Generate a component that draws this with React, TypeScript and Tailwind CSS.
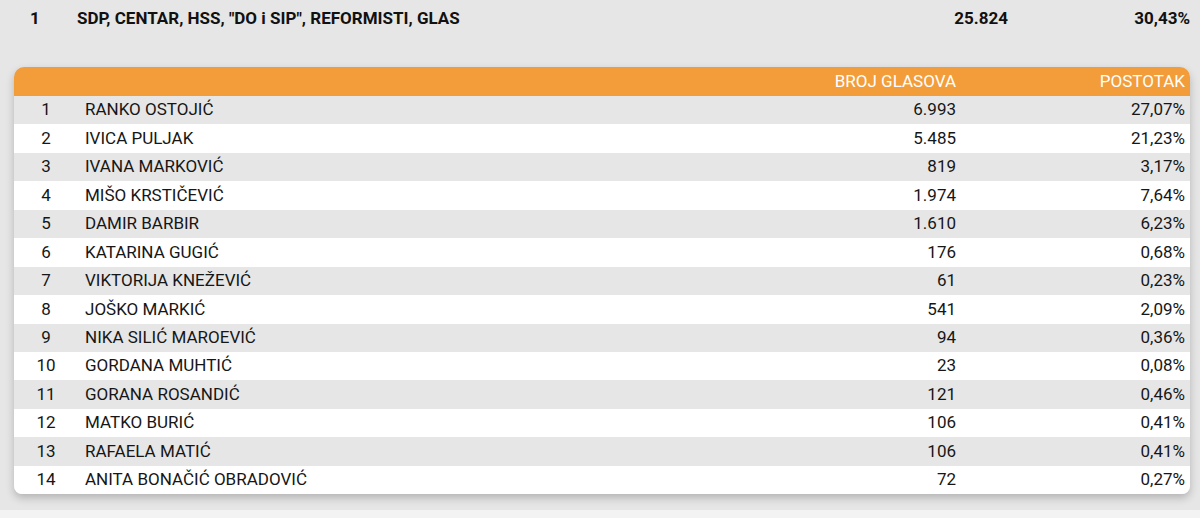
import React from "react";

const rows: [string, string, string][] = [
  ["RANKO OSTOJIĆ", "6.993", "27,07%"],
  ["IVICA PULJAK", "5.485", "21,23%"],
  ["IVANA MARKOVIĆ", "819", "3,17%"],
  ["MIŠO KRSTIČEVIĆ", "1.974", "7,64%"],
  ["DAMIR BARBIR", "1.610", "6,23%"],
  ["KATARINA GUGIĆ", "176", "0,68%"],
  ["VIKTORIJA KNEŽEVIĆ", "61", "0,23%"],
  ["JOŠKO MARKIĆ", "541", "2,09%"],
  ["NIKA SILIĆ MAROEVIĆ", "94", "0,36%"],
  ["GORDANA MUHTIĆ", "23", "0,08%"],
  ["GORANA ROSANDIĆ", "121", "0,46%"],
  ["MATKO BURIĆ", "106", "0,41%"],
  ["RAFAELA MATIĆ", "106", "0,41%"],
  ["ANITA BONAČIĆ OBRADOVIĆ", "72", "0,27%"],
];

export default function App() {
  return (
    <div className="w-[1200px] h-[518px] bg-[#f3f3f3] font-['Roboto',_'Liberation_Sans',_sans-serif] text-[#161616]">
      <div className="h-[510px] bg-[#e6e6e6] overflow-hidden">
        {/* party summary */}
        <div className="flex items-center h-[37px] text-[17px] font-bold text-[#111]">
          <div className="w-[77px] pl-[30px]">1</div>
          <div className="flex-1">SDP, CENTAR, HSS, "DO i SIP", REFORMISTI, GLAS</div>
          <div className="w-[120px] text-right">25.824</div>
          <div className="w-[192px] pr-[10px] text-right">30,43%</div>
        </div>

        {/* candidates */}
        <div className="mt-[30px] ml-[14px] mr-[10px] rounded-t-[10px] rounded-b-[8px] shadow-[0_4px_8px_rgba(0,0,0,0.22)] overflow-hidden">
          <div className="flex items-center h-[29px] bg-[#f29d39] text-white text-[17px]">
            <div className="w-[64px]" />
            <div className="flex-1" />
            <div className="w-[200px] text-right">BROJ GLASOVA</div>
            <div className="w-[234px] pr-[5px] text-right">POSTOTAK</div>
          </div>
          {rows.map(([name, votes, pct], i) => (
            <div
              key={name}
              className={
                "flex items-center h-[28.45px] text-[17px] " +
                (i % 2 === 0 ? "bg-[#e6e6e6]" : "bg-white")
              }
            >
              <div className="w-[64px] text-center">{i + 1}</div>
              <div className="flex-1 pl-[7px]">{name}</div>
              <div className="w-[200px] text-right">{votes}</div>
              <div className="w-[234px] pr-[5px] text-right">{pct}</div>
            </div>
          ))}
        </div>
      </div>
    </div>
  );
}
